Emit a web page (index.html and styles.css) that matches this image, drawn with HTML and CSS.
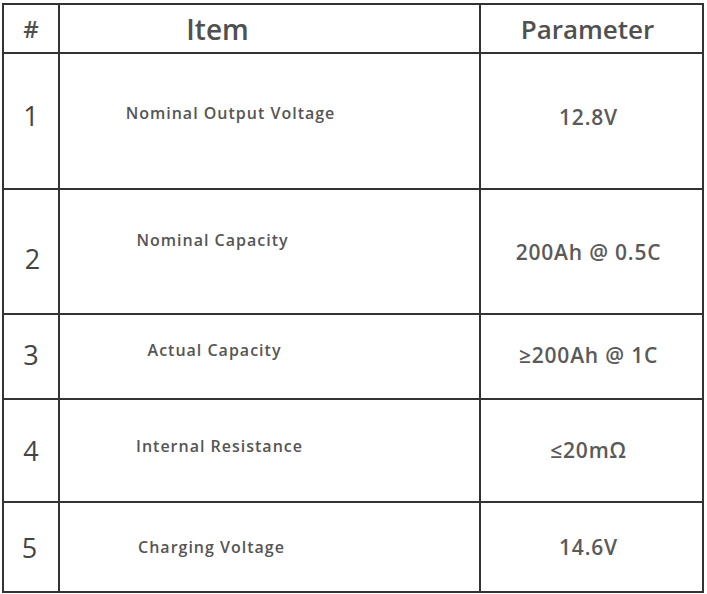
FILE: index.html
```html
<!DOCTYPE html>
<html>
<head>
<meta charset="utf-8">
<link rel="stylesheet" href="styles.css">
</head>
<body>
<table class="spec">
  <colgroup>
    <col class="c-num">
    <col class="c-item">
    <col class="c-param">
  </colgroup>
  <thead>
    <tr class="head">
      <th class="num">#</th>
      <th class="item">Item</th>
      <th class="param">Parameter</th>
    </tr>
  </thead>
  <tbody>
    <tr class="r1">
      <td class="num">1</td>
      <td class="item">Nominal Output Voltage</td>
      <td class="param">12.8V</td>
    </tr>
    <tr class="r2">
      <td class="num">2</td>
      <td class="item">Nominal Capacity</td>
      <td class="param">200Ah @ 0.5C</td>
    </tr>
    <tr class="r3">
      <td class="num">3</td>
      <td class="item">Actual Capacity</td>
      <td class="param">≥200Ah @ 1C</td>
    </tr>
    <tr class="r4">
      <td class="num">4</td>
      <td class="item">Internal Resistance</td>
      <td class="param">≤20mΩ</td>
    </tr>
    <tr class="r5">
      <td class="num">5</td>
      <td class="item">Charging Voltage</td>
      <td class="param">14.6V</td>
    </tr>
  </tbody>
</table>
</body>
</html>
```
FILE: styles.css
```css
html, body {
  margin: 0;
  padding: 0;
  background: #ffffff;
}
body {
  padding: 3px 0 0 2px;
  font-family: "Open Sans", "Noto Sans", "Liberation Sans", sans-serif;
  color: #555555;
}
.spec {
  border-collapse: collapse;
  table-layout: fixed;
  width: 702px;
}
.c-num { width: 56px; }
.c-item { width: 421px; }
.c-param { width: 223px; }
.spec th, .spec td {
  border: 2px solid #333333;
  padding: 0;
  text-align: center;
  vertical-align: middle;
}
.head { height: 49px; }
.head th {
  font-weight: 600;
  color: #505050;
}
.head .num { font-size: 24px; }
.head .item { font-size: 28px; padding-right: 104px; }
.head .param { font-size: 26px; padding-right: 8px; }

td.num {
  font-size: 27px;
  font-weight: 400;
  color: #444444;
}
td.item {
  font-size: 16px;
  font-weight: 600;
  letter-spacing: 1px;
}
td.param {
  font-size: 21px;
  font-weight: 600;
  letter-spacing: 0.8px;
  color: #5a5a5a;
  padding-right: 6px;
}

.r1 { height: 136px; }
.r1 .item { padding-right: 78px; padding-bottom: 16px; }
.r1 .param { padding-bottom: 8px; }
.r1 .num { padding-bottom: 12px; }

.r2 { height: 125px; }
.r2 .item { padding-right: 114px; padding-bottom: 24px; }
.r2 .num { padding-top: 14px; padding-left: 3px; }

.r3 { height: 85px; }
.r3 .item { padding-right: 110px; padding-bottom: 14px; }
.r3 .num { padding-bottom: 4px; }
.r3 .param { padding-bottom: 4px; }

.r4 { height: 103px; }
.r4 .item { padding-right: 100px; padding-bottom: 10px; }
.r4 .param { padding-bottom: 2px; }

.r5 { height: 90px; }
.r5 .item { padding-right: 116px; }
.r5 .num { padding-right: 3px; }
```
